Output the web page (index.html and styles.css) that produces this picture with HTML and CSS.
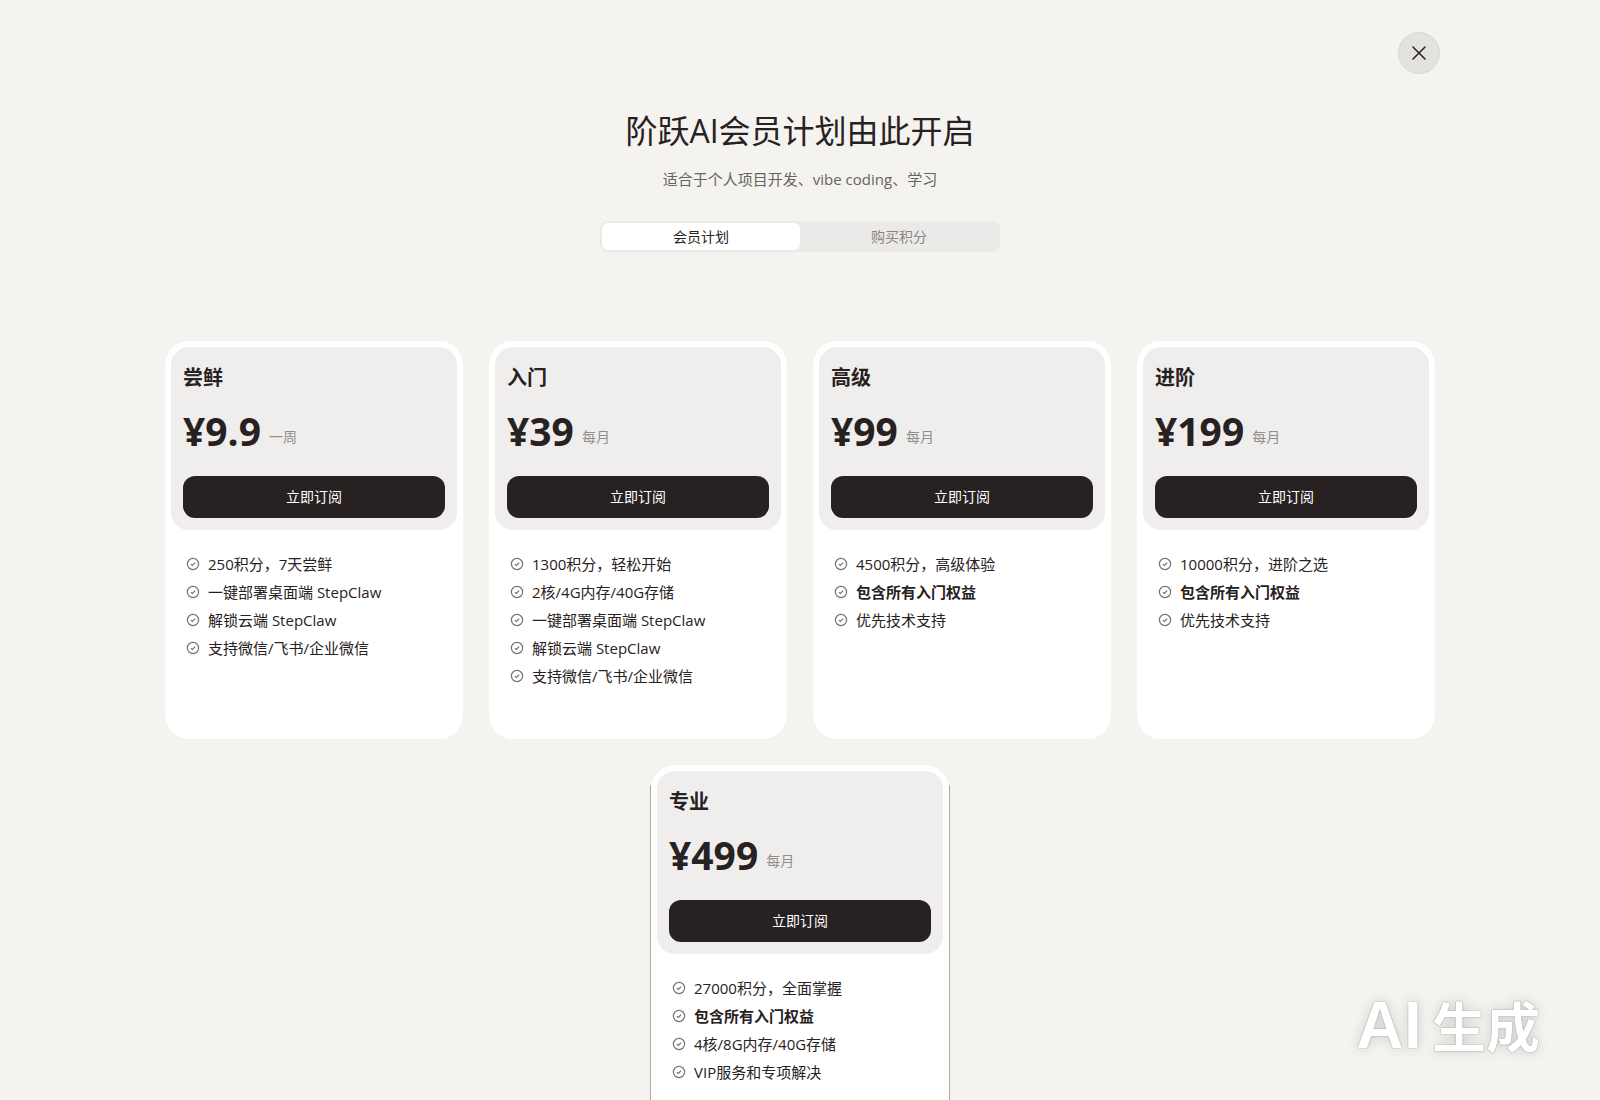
FILE: index.html
```html
<!DOCTYPE html>
<html lang="zh-CN">
<head>
  <meta charset="UTF-8" />
  <meta name="viewport" content="width=device-width, initial-scale=1.0"/>
  <title>阶跃AI会员计划</title>
  <link rel="stylesheet" href="styles.css">
</head>
<body>
  <svg class="sprite" aria-hidden="true">
    <symbol id="check" viewBox="0 0 14 14">
      <circle cx="7" cy="7" r="5.6" />
      <path d="M4.9 7.2 6.4 8.5 9.1 5.6" />
    </symbol>
  </svg>

  <div class="overlay">
    <header class="topbar">
      <button class="close-btn" type="button" aria-label="关闭">
        <svg viewBox="0 0 14 14"><path d="M1 1 13 13M13 1 1 13" /></svg>
      </button>
    </header>

    <main>
      <h1>阶跃AI会员计划由此开启</h1>
      <p class="subtitle">适合于个人项目开发、vibe coding、学习</p>

      <div class="tabs" role="tablist">
        <button class="tab active" type="button" role="tab" aria-selected="true">会员计划</button>
        <button class="tab" type="button" role="tab" aria-selected="false">购买积分</button>
      </div>

      <div class="plans">
        <section class="card">
          <div class="panel">
            <h2>尝鲜</h2>
            <p class="price">¥9.9 <span class="period">一周</span></p>
            <button class="subscribe-btn" type="button">立即订阅</button>
          </div>
          <ul class="features">
            <li><svg><use href="#check" /></svg>250积分，7天尝鲜</li>
            <li><svg><use href="#check" /></svg>一键部署桌面端 StepClaw</li>
            <li><svg><use href="#check" /></svg>解锁云端 StepClaw</li>
            <li><svg><use href="#check" /></svg>支持微信/飞书/企业微信</li>
          </ul>
        </section>

        <section class="card">
          <div class="panel">
            <h2>入门</h2>
            <p class="price">¥39 <span class="period">每月</span></p>
            <button class="subscribe-btn" type="button">立即订阅</button>
          </div>
          <ul class="features">
            <li><svg><use href="#check" /></svg>1300积分，轻松开始</li>
            <li><svg><use href="#check" /></svg>2核/4G内存/40G存储</li>
            <li><svg><use href="#check" /></svg>一键部署桌面端 StepClaw</li>
            <li><svg><use href="#check" /></svg>解锁云端 StepClaw</li>
            <li><svg><use href="#check" /></svg>支持微信/飞书/企业微信</li>
          </ul>
        </section>

        <section class="card">
          <div class="panel">
            <h2>高级</h2>
            <p class="price">¥99 <span class="period">每月</span></p>
            <button class="subscribe-btn" type="button">立即订阅</button>
          </div>
          <ul class="features">
            <li><svg><use href="#check" /></svg>4500积分，高级体验</li>
            <li><svg><use href="#check" /></svg><strong>包含所有入门权益</strong></li>
            <li><svg><use href="#check" /></svg>优先技术支持</li>
          </ul>
        </section>

        <section class="card">
          <div class="panel">
            <h2>进阶</h2>
            <p class="price">¥199 <span class="period">每月</span></p>
            <button class="subscribe-btn" type="button">立即订阅</button>
          </div>
          <ul class="features">
            <li><svg><use href="#check" /></svg>10000积分，进阶之选</li>
            <li><svg><use href="#check" /></svg><strong>包含所有入门权益</strong></li>
            <li><svg><use href="#check" /></svg>优先技术支持</li>
          </ul>
        </section>

        <section class="card outlined">
          <div class="panel">
            <h2>专业</h2>
            <p class="price">¥499 <span class="period">每月</span></p>
            <button class="subscribe-btn" type="button">立即订阅</button>
          </div>
          <ul class="features">
            <li><svg><use href="#check" /></svg>27000积分，全面掌握</li>
            <li><svg><use href="#check" /></svg><strong>包含所有入门权益</strong></li>
            <li><svg><use href="#check" /></svg>4核/8G内存/40G存储</li>
            <li><svg><use href="#check" /></svg>VIP服务和专项解决</li>
          </ul>
        </section>
      </div>
    </main>
  </div>

  <div class="watermark"><span class="latin">AI</span><span>生成</span></div>
</body>
</html>
```
FILE: styles.css
```css
* {
  box-sizing: border-box;
}
body {
  margin: 0;
  background: #f4f3ef;
  color: #272121;
  font-family: "Open Sans", "Noto Sans CJK SC", sans-serif;
  font-size: 14px;
}
h1, h2, p, ul {
  margin: 0;
  padding: 0;
}
button {
  border: none;
  padding: 0;
  font: inherit;
  cursor: pointer;
}
.sprite {
  display: none;
}
.overlay {
  height: 100vh;
  overflow-y: auto;
  scrollbar-width: none;
}
.topbar {
  display: flex;
  justify-content: flex-end;
  padding: 32px 10% 0;
}
.close-btn {
  display: flex;
  align-items: center;
  justify-content: center;
  width: 42px;
  height: 42px;
  border: 1px solid #d9d8d5;
  border-radius: 50%;
  background: #e3e2df;
}
.close-btn svg {
  width: 14px;
  height: 14px;
  fill: none;
  stroke: #272121;
  stroke-width: 1.5;
  stroke-linecap: round;
}
main {
  display: flex;
  flex-direction: column;
  align-items: center;
  padding: 33px 20px 48px;
}
h1 {
  font-size: 32px;
  font-weight: 400;
  line-height: 48px;
}
.subtitle {
  margin-top: 12px;
  color: #666361;
  font-size: 15px;
  line-height: 24px;
}
.tabs {
  display: flex;
  width: 400px;
  max-width: 100%;
  margin-top: 30px;
  padding: 2px;
  border-radius: 8px;
  background: #ebeae8;
}
.tab {
  flex: 1;
  height: 27px;
  padding-bottom: 2px;
  border-radius: 6px;
  background: none;
  color: #8c8583;
}
.tab.active {
  background: #fff;
  color: #272121;
}
.plans {
  display: flex;
  flex-wrap: wrap;
  justify-content: center;
  gap: 26px;
  max-width: 1280px;
  margin-top: 89px;
}
.card {
  width: 298px;
  padding: 6px 6px 49px;
  border-radius: 24px;
  background: #fff;
}
/* hairlines on the straight part of the sides only */
.card.outlined {
  position: relative;
}
.card.outlined::before {
  content: "";
  position: absolute;
  inset: 20px -1px;
  border: solid #a9a8a6;
  border-width: 0 1px;
  pointer-events: none;
}
.panel {
  padding: 12px;
  border-radius: 18px;
  background: #efeeec;
}
.panel h2 {
  font-size: 20px;
  font-weight: 700;
  line-height: 38px;
}
.price {
  display: flex;
  align-items: flex-end;
  gap: 8px;
  margin: 10px 0 21px;
  font-size: 39px;
  font-weight: 700;
  line-height: 48px;
}
.period {
  color: #918e8c;
  font-size: 14px;
  font-weight: 400;
  line-height: 36px;
}
.subscribe-btn {
  width: 100%;
  height: 42px;
  padding-bottom: 2px;
  border-radius: 12px;
  background: #272121;
  color: #fff;
}
.features {
  padding: 20px 15px 0;
  font-size: 15px;
  list-style: none;
}
.features li {
  display: flex;
  align-items: center;
  gap: 8px;
  height: 28px;
  line-height: 28px;
}
.features svg {
  width: 14px;
  height: 14px;
  fill: none;
  stroke: #777371;
  stroke-width: 1.2;
}
.watermark {
  position: fixed;
  right: 60px;
  bottom: 31px;
  display: flex;
  align-items: baseline;
  gap: 10px;
  color: #fff;
  font-family: "Liberation Sans", "Noto Sans CJK SC", sans-serif;
  font-size: 54px;
  font-weight: 700;
  line-height: 80px;
  text-shadow: 0 0 1px #888, 0 0 1px #999, 0 0 12px #cccbc7;
  pointer-events: none;
}
.watermark .latin {
  font-size: 66px;
}
```
